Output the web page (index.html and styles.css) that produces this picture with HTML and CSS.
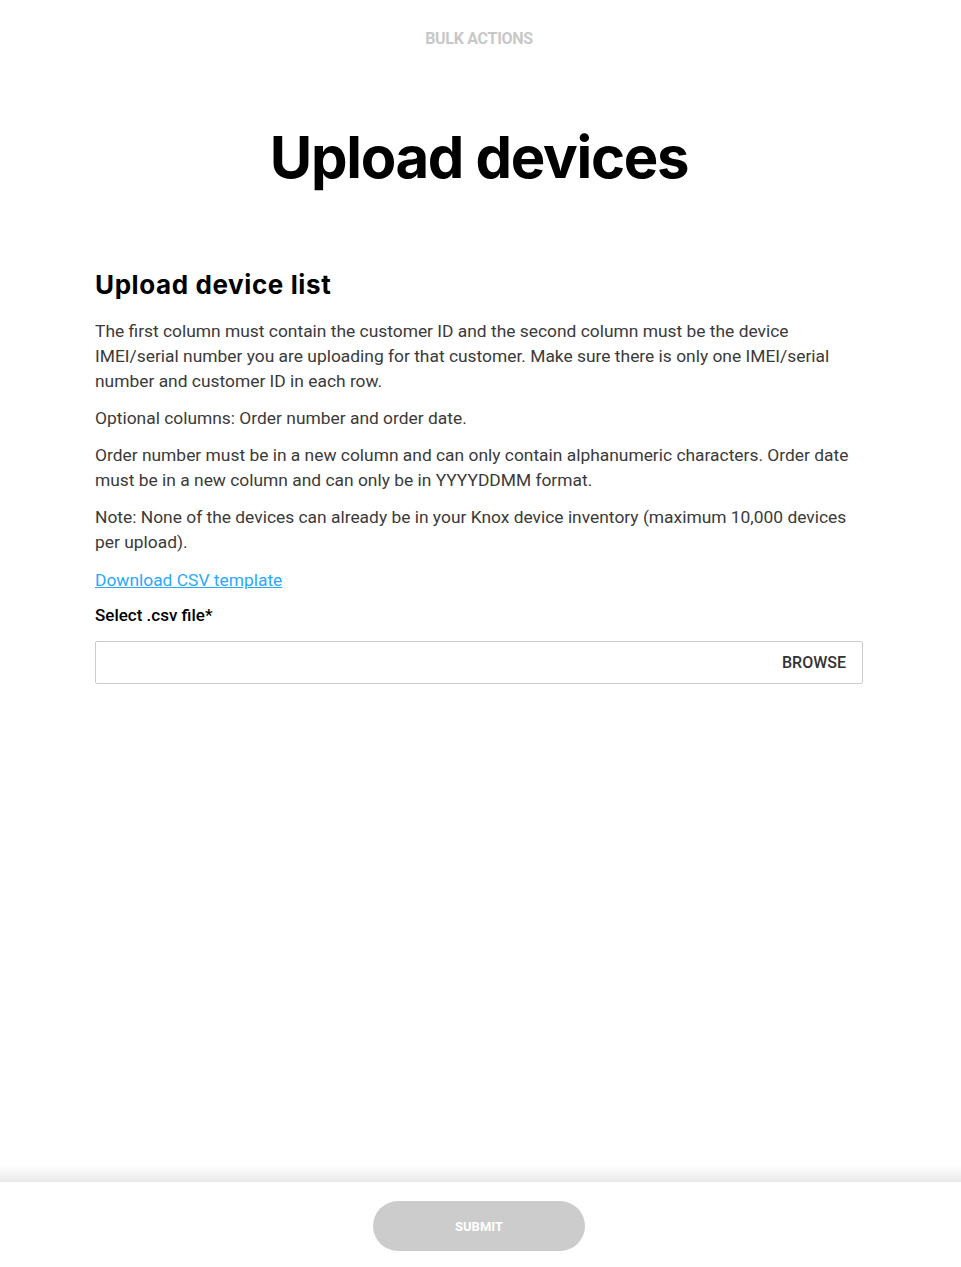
FILE: index.html
```html
<!DOCTYPE html>
<html lang="en">
<head>
  <meta charset="UTF-8">
  <title>Upload devices</title>
  <link rel="stylesheet" href="styles.css">
</head>
<body>

  <div class="page">
    <p class="eyebrow">BULK ACTIONS</p>
    <h1 class="page-title">Upload devices</h1>

    <section class="upload">
      <h2>Upload device list</h2>
      <p>The first column must contain the customer ID and the second column must be the device IMEI/serial number you are uploading for that customer. Make sure there is only one IMEI/serial number and customer ID in each row.</p>
      <p>Optional columns: Order number and order date.</p>
      <p>Order number must be in a new column and can only contain alphanumeric characters. Order date must be in a new column and can only be in YYYYDDMM format.</p>
      <p>Note: None of the devices can already be in your Knox device inventory (maximum 10,000 devices per upload).</p>

      <a href="#" class="template-link">Download CSV template</a>

      <label class="field-label" for="csvFile">Select .csv file*</label>
      <div class="file-field">
        <input type="text" id="csvFile" class="file-name" readonly>
        <button class="browse">BROWSE</button>
      </div>
    </section>
  </div>

  <footer class="actions">
    <button class="submit" disabled>SUBMIT</button>
  </footer>

</body>
</html>
```

FILE: styles.css
```css
body {
  margin: 0;
  padding-right: 3px;
  background: #fff;
  color: #333;
  font-family: Roboto, "Noto Sans", sans-serif;
}

.page {
  max-width: 768px;
  margin: 0 auto;
  padding-top: 29px;
  padding-bottom: 120px;
}

.eyebrow {
  margin: 0;
  text-align: center;
  color: #c8c8c8;
  font-size: 16px;
  font-weight: 700;
  line-height: 20px;
  letter-spacing: -0.3px;
}

.page-title {
  margin: 75px 0 0;
  text-align: center;
  color: #000;
  font-family: Inter, "Noto Sans", sans-serif;
  font-size: 58px;
  font-weight: 700;
  line-height: 66px;
  letter-spacing: -1.3px;
}

.upload {
  margin-top: 79px;
}

.upload h2 {
  margin: 0 0 18px;
  color: #000;
  font-family: Inter, "Noto Sans", sans-serif;
  font-size: 26px;
  font-weight: 700;
  line-height: 32px;
  letter-spacing: 0.6px;
}

.upload p {
  margin: 0 0 12px;
  font-size: 17.4px;
  line-height: 25px;
  font-weight: 400;
  color: #3a3a3a;
}

.template-link {
  display: block;
  margin-top: 13px;
  color: #2aa9fc;
  font-size: 17.4px;
  line-height: 25px;
  font-weight: 400;
  text-decoration: underline;
}

.field-label {
  display: block;
  margin-top: 10px;
  color: #000;
  font-size: 17px;
  line-height: 25px;
  font-weight: 500;
}

.file-field {
  display: flex;
  align-items: center;
  margin-top: 13px;
  height: 41px;
  border: 1px solid #ccc;
  border-radius: 2px;
}

.file-name {
  flex: 1;
  border: none;
  outline: none;
  background: none;
}

.browse {
  border: none;
  background: none;
  padding: 0 16px;
  color: #333;
  font-family: Roboto, "Noto Sans", sans-serif;
  font-size: 16px;
  font-weight: 500;
  cursor: pointer;
}

/* sticky bar with the submit button */
.actions {
  position: fixed;
  left: 0;
  right: 0;
  bottom: 0;
  height: 85px;
  padding-right: 3px;
  display: flex;
  align-items: center;
  justify-content: center;
  background: #fff;
}

/* soft fade above the bar */
.actions::before {
  content: "";
  position: absolute;
  left: 0;
  right: 0;
  top: -17px;
  height: 17px;
  background: linear-gradient(rgba(0, 0, 0, 0), rgba(0, 0, 0, 0.09));
}

.submit {
  width: 212px;
  height: 50px;
  border: none;
  border-radius: 25px;
  background: #ccc;
  color: #fff;
  font-family: Roboto, "Noto Sans", sans-serif;
  font-size: 13px;
  font-weight: 700;
  margin-top: 3px;
}
```
